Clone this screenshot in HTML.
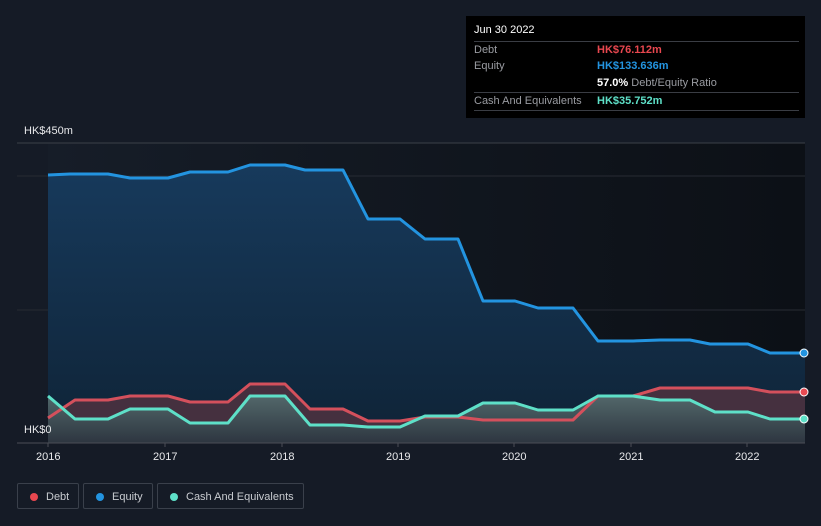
<!DOCTYPE html>
<html><head><meta charset="utf-8"><style>
body{margin:0;width:821px;height:526px;background:#151b26;font-family:"Liberation Sans",sans-serif;overflow:hidden;position:relative}
.tt{position:absolute;left:466px;top:16px;width:339px;height:102px;background:#000;color:#fff;font-size:11px}
.row{position:absolute;left:8px;width:325px;border-top:1px solid #3a3d44;height:17px;line-height:17px;color:#9a9ca2}
.lg{position:absolute;top:483px;height:26px;border:1px solid #3a404b;border-radius:2px;color:#c8cbd0;font-size:11px;line-height:26px;box-sizing:border-box}
.lg i{position:absolute;left:12px;top:9px;width:8px;height:8px;border-radius:50%}
.ax{position:absolute;color:#e8e9eb;font-size:11px}
</style></head><body>
<svg width="821" height="526" style="position:absolute;left:0;top:0">
<defs>
<linearGradient id="bg" x1="0" x2="1"><stop offset="0" stop-color="#161d28"/><stop offset="1" stop-color="#0c1016"/></linearGradient>
<linearGradient id="eq" x1="0" y1="0" x2="0" y2="1"><stop offset="0" stop-color="#173a5c"/><stop offset="1" stop-color="#0f2336"/></linearGradient>
<linearGradient id="cs" x1="0" y1="0" x2="0" y2="1"><stop offset="0" stop-color="#536a6c"/><stop offset="1" stop-color="#2c3640"/></linearGradient>
</defs>
<rect x="48" y="143" width="757" height="300" fill="url(#bg)"/>
<line x1="17" y1="143" x2="805" y2="143" stroke="#3c4048"/>
<line x1="17" y1="176" x2="805" y2="176" stroke="#272b33"/>
<line x1="17" y1="310" x2="805" y2="310" stroke="#272b33"/>
<path d="M48,175 L70,174 108,174 130,178 168,178 190,172 228,172 250,165 285,165 305,170 343,170 368,219 400,219 425,239 458,239 483,301 515,301 538,308 573,308 598,341 633,341 660,340 690,340 710,344 748,344 770,353 805,353 L805,443 48,443Z" fill="url(#eq)"/>
<path d="M48,418 L75,400 108,400 130,396 168,396 190,402 228,402 250,384 285,384 310,409 343,409 368,421 400,421 425,417 458,417 483,420 573,420 598,396 633,396 660,388 748,388 770,392 805,392 L805,443 48,443Z" fill="#45303f"/>
<path d="M48,396 L75,419 108,419 130,409 168,409 190,423 228,423 250,396 285,396 310,425 343,425 368,427 400,427 425,416 458,416 483,403 515,403 538,410 573,410 598,396 633,396 660,400 690,400 715,412 748,412 770,419 805,419 L805,443 48,443Z" fill="url(#cs)" opacity="0.95"/>
<g fill="none" stroke-width="3" stroke-linejoin="round">
<path d="M48,175 L70,174 108,174 130,178 168,178 190,172 228,172 250,165 285,165 305,170 343,170 368,219 400,219 425,239 458,239 483,301 515,301 538,308 573,308 598,341 633,341 660,340 690,340 710,344 748,344 770,353 805,353" stroke="#2394e0"/>
<path d="M48,418 L75,400 108,400 130,396 168,396 190,402 228,402 250,384 285,384 310,409 343,409 368,421 400,421 425,417 458,417 483,420 573,420 598,396 633,396 660,388 748,388 770,392 805,392" stroke="#d4505c"/>
<path d="M48,396 L75,419 108,419 130,409 168,409 190,423 228,423 250,396 285,396 310,425 343,425 368,427 400,427 425,416 458,416 483,403 515,403 538,410 573,410 598,396 633,396 660,400 690,400 715,412 748,412 770,419 805,419" stroke="#5ee0c8"/>
</g>
<circle cx="804" cy="353" r="4" fill="#2394e0" stroke="#fff" stroke-width="1"/>
<circle cx="804" cy="392" r="4" fill="#e84a52" stroke="#fff" stroke-width="1"/>
<circle cx="804" cy="419" r="4" fill="#5ee0c8" stroke="#fff" stroke-width="1"/>
<line x1="17" y1="443" x2="805" y2="443" stroke="#4a4e56"/>
<g stroke="#4a4e56"><line x1="48" y1="443" x2="48" y2="447"/><line x1="165" y1="443" x2="165" y2="447"/><line x1="282" y1="443" x2="282" y2="447"/><line x1="398" y1="443" x2="398" y2="447"/><line x1="514" y1="443" x2="514" y2="447"/><line x1="631" y1="443" x2="631" y2="447"/><line x1="747" y1="443" x2="747" y2="447"/></g>
</svg>
<div class="ax" style="left:24px;top:125px">HK$450m</div>
<div class="ax" style="left:24px;top:424px">HK$0</div>
<div class="ax" style="left:36px;top:451px">2016</div>
<div class="ax" style="left:153px;top:451px">2017</div>
<div class="ax" style="left:270px;top:451px">2018</div>
<div class="ax" style="left:386px;top:451px">2019</div>
<div class="ax" style="left:502px;top:451px">2020</div>
<div class="ax" style="left:619px;top:451px">2021</div>
<div class="ax" style="left:735px;top:451px">2022</div>
<div class="tt">
<div style="position:absolute;left:8px;top:8px">Jun 30 2022</div>
<div class="row" style="top:25px">Debt<span style="position:absolute;left:123px;color:#e8474f;font-weight:bold">HK$76.112m</span></div>
<div class="row" style="top:42px;border:none">Equity<span style="position:absolute;left:123px;color:#2394e0;font-weight:bold">HK$133.636m</span></div>
<div class="row" style="top:59px;border:none"><span style="position:absolute;left:123px"><b style="color:#fff">57.0%</b> Debt/Equity Ratio</span></div>
<div class="row" style="top:76px;border-bottom:1px solid #3a3d44">Cash And Equivalents<span style="position:absolute;left:123px;color:#5ee0c8;font-weight:bold">HK$35.752m</span></div>
</div>
<div class="lg" style="left:17px;width:62px"><i style="background:#e8474f"></i><span style="margin-left:28px">Debt</span></div>
<div class="lg" style="left:83px;width:70px"><i style="background:#2394e0"></i><span style="margin-left:28px">Equity</span></div>
<div class="lg" style="left:157px;width:147px"><i style="background:#5ee0c8"></i><span style="margin-left:28px">Cash And Equivalents</span></div>
</body></html>
